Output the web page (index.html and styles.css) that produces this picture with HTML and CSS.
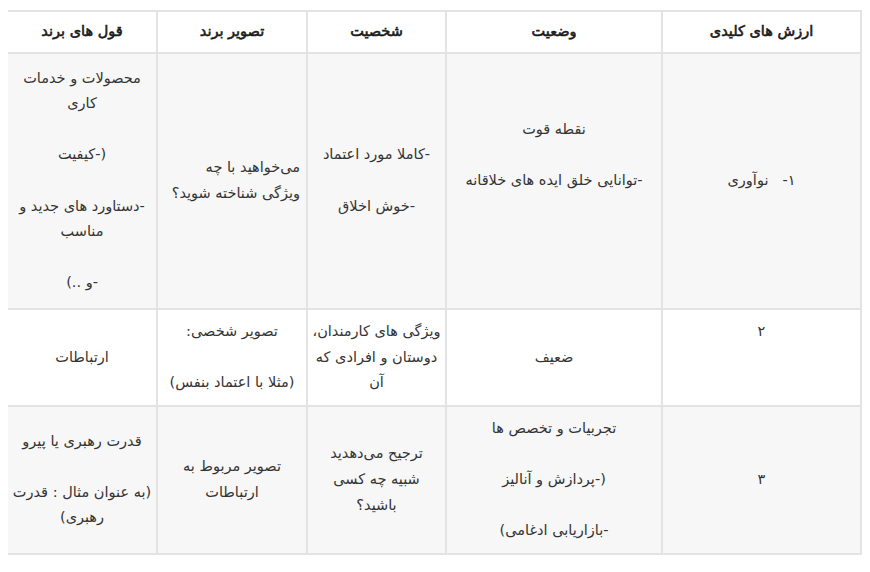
FILE: index.html
```html
<!DOCTYPE html>
<html lang="fa" dir="rtl">
<head>
<meta charset="utf-8">
<title>ارزش های برند</title>
<link rel="stylesheet" href="styles.css">
</head>
<body>
<table class="brand-table">
  <colgroup>
    <col class="c-values">
    <col class="c-status">
    <col class="c-person">
    <col class="c-image">
    <col class="c-promise">
  </colgroup>
  <thead>
    <tr>
      <th>ارزش های کلیدی</th>
      <th>وضعیت</th>
      <th>شخصیت</th>
      <th>تصویر برند</th>
      <th>قول های برند</th>
    </tr>
  </thead>
  <tbody>
    <tr class="row-alt row-first">
      <td><span class="num">۱-</span>نوآوری</td>
      <td>نقطه قوت<br><br>-توانایی خلق ایده های خلاقانه<br><br>&nbsp;</td>
      <td>-کاملا مورد اعتماد<br><br>-خوش اخلاق</td>
      <td class="start">می‌خواهید با چه<br>ویژگی شناخته شوید؟</td>
      <td>محصولات و خدمات<br>کاری<br><br>(-کیفیت<br><br>-دستاورد های جدید و<br>مناسب<br><br>-و ..)</td>
    </tr>
    <tr>
      <td class="top">۲</td>
      <td>ضعیف</td>
      <td class="tight">ویژگی های کارمندان،<br>دوستان و افرادی که<br>آن</td>
      <td>تصویر شخصی:<br><br>(مثلا با اعتماد بنفس)</td>
      <td>ارتباطات</td>
    </tr>
    <tr class="row-alt">
      <td>۳</td>
      <td>تجربیات و تخصص ها<br><br>(-پردازش و آنالیز<br><br>-بازاریابی ادغامی)</td>
      <td class="tight">ترجیح می‌دهدید<br>شبیه چه کسی<br>باشید؟</td>
      <td>تصویر مربوط به<br>ارتباطات</td>
      <td class="tight">قدرت رهبری یا پیرو<br><br>(به عنوان مثال : قدرت<br>رهبری)</td>
    </tr>
  </tbody>
</table>
</body>
</html>
```
FILE: styles.css
```css
html, body {
  background: #ffffff;
}
body {
  margin: 10px 8px;
  font-family: "DejaVu Sans", "Noto Sans", sans-serif;
  font-size: 14.5px;
  color: #333333;
}
.brand-table {
  width: 854px;
  border-collapse: collapse;
  table-layout: fixed;
}
.c-values { width: 199px; }
.c-status { width: 216px; }
.c-person { width: 139px; }
.c-image { width: 150px; }
.c-promise { width: 150px; }
.brand-table th,
.brand-table td {
  border: 2px solid #e3e3e3;
  text-align: center;
  vertical-align: middle;
  line-height: 25.6px;
  padding: 9px 6px;
}
.brand-table th {
  font-weight: normal;
  font-size: 14.5px;
  color: #1a1a1a;
  -webkit-text-stroke: 0.6px #1a1a1a;
  padding: 7px 6px;
}
.row-alt td {
  background: #f7f7f7;
}
.row-first td {
  padding-top: 12px;
  padding-bottom: 12px;
}
.brand-table td.start {
  text-align: right;
}
.brand-table td.top {
  vertical-align: top;
}
.brand-table td.tight {
  white-space: nowrap;
  padding-left: 2px;
  padding-right: 2px;
}
.num {
  margin-left: 14px;
}
```
